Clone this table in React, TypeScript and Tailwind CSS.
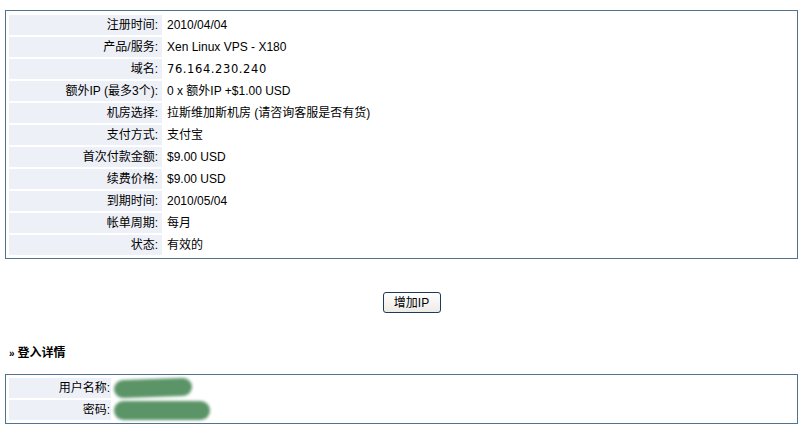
const rows: { label: string; value: string; mono?: boolean }[] = [
  { label: '注册时间:', value: '2010/04/04' },
  { label: '产品/服务:', value: 'Xen Linux VPS - X180' },
  { label: '域名:', value: '76.164.230.240', mono: true },
  { label: '额外IP (最多3个):', value: '0 x 额外IP +$1.00 USD' },
  { label: '机房选择:', value: '拉斯维加斯机房 (请咨询客服是否有货)' },
  { label: '支付方式:', value: '支付宝' },
  { label: '首次付款金额:', value: '$9.00 USD' },
  { label: '续费价格:', value: '$9.00 USD' },
  { label: '到期时间:', value: '2010/05/04' },
  { label: '帐单周期:', value: '每月' },
  { label: '状态:', value: '有效的' },
];

export default function App() {
  return (
    <div className="w-[810px] h-[434px] bg-white text-black text-[12px] leading-[20px] font-['Liberation_Sans','Noto_Sans_CJK_SC',sans-serif] overflow-hidden">
      <div className="pl-[5px] pt-[10px]">
        {/* 产品详情 */}
        <div className="w-[793px] border border-[#4f7390] pt-[4px] pb-[3px] px-[3px]">
          <div className="flex flex-col gap-[2px]">
            {rows.map((r) => (
              <div key={r.label} className="flex gap-[2px] h-[20px]">
                <div className="w-[153px] shrink-0 bg-[#eef0f8] text-right pr-[4px]">{r.label}</div>
                <div
                  className={
                    r.mono
                      ? "flex-1 pl-[3px] font-['DejaVu_Sans',sans-serif] text-[11.5px] tracking-[0.6px]"
                      : 'flex-1 pl-[3px]'
                  }
                >
                  {r.value}
                </div>
              </div>
            ))}
          </div>
        </div>

        <div className="flex justify-center pl-[8px] mt-[33px]">
          <button className="w-[58px] h-[21px] rounded-[3px] border border-[#1e3b5a] bg-gradient-to-b from-white to-[#ecebe6] text-[12px] leading-[18px]">
            增加IP
          </button>
        </div>

        <div className="mt-[30px] pl-[4px] font-bold h-[20px]">
          <span className="text-[10px] mr-[3px]">»</span>登入详情
        </div>

        {/* 登入详情 */}
        <div className="mt-[11px] w-[793px] border border-[#4f7390] pt-[3px] pb-[3px] px-[3px]">
          <div className="flex flex-col gap-[2px]">
            <div className="flex gap-[2px] h-[20px]">
              <div className="w-[102px] shrink-0 bg-[#eef0f8] text-right pr-[1px]">用户名称:</div>
              <div className="flex-1 relative">
                <div className="absolute left-[1px] top-[1px] w-[78px] h-[18px] rounded-[9px] bg-[#5b9467] blur-[1.5px] -rotate-2" />
              </div>
            </div>
            <div className="flex gap-[2px] h-[20px]">
              <div className="w-[102px] shrink-0 bg-[#eef0f8] text-right pr-[1px]">密码:</div>
              <div className="flex-1 relative">
                <div className="absolute left-[1px] top-[1px] w-[96px] h-[19px] rounded-[10px] bg-[#5b9467] blur-[1.5px]" />
              </div>
            </div>
          </div>
        </div>
      </div>
    </div>
  );
}
